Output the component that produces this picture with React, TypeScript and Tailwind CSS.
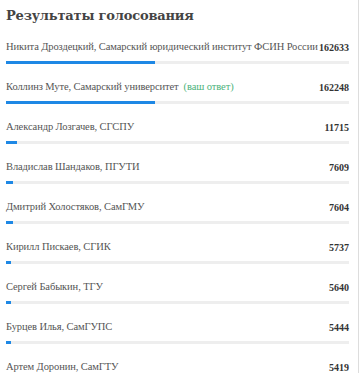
import React from 'react';

// --- DATOS ---
const results = [
  { name: 'Никита Дроздецкий, Самарский юридический институт ФСИН России', votes: 162633 },
  { name: 'Коллинз Муте, Самарский университет', votes: 162248, mine: true },
  { name: 'Александр Лозгачев, СГСПУ', votes: 11715 },
  { name: 'Владислав Шандаков, ПГУТИ', votes: 7609 },
  { name: 'Дмитрий Холостяков, СамГМУ', votes: 7604 },
  { name: 'Кирилл Пискаев, СГИК', votes: 5737 },
  { name: 'Сергей Бабыкин, ТГУ', votes: 5640 },
  { name: 'Бурцев Илья, СамГУПС', votes: 5444 },
  { name: 'Артем Доронин, СамГТУ', votes: 5419 },
];

const total = results.reduce((s, r) => s + r.votes, 0);

const ResultRow = ({ name, votes, mine }: { name: string; votes: number; mine?: boolean }) => (
  <div className="flex flex-col font-['Liberation_Serif',serif]">
    <div className="flex items-center justify-between gap-[6px] h-[14px]">
      <span className="min-w-0 text-[10.5px] text-[#555] whitespace-nowrap tracking-[-0.1px]">
        {name}
        {mine && <span className="ml-[5px] text-[#4cb37c]">(ваш ответ)</span>}
      </span>
      <span className="shrink-0 text-[10px] font-bold text-[#333]">{votes}</span>
    </div>
    <div className="mt-[7px] h-[3px] bg-[#eeeeee]">
      <div className="h-full bg-[#1e88e5]" style={{ width: `${(votes / total) * 100}%` }} />
    </div>
  </div>
);

function App() {
  return (
    <div className="w-[363px] h-[373px] bg-white overflow-hidden font-['DejaVu_Serif',serif]">
      <div className="w-[359px] h-full border-r border-[#dddddd] pl-[6px] pr-[9px]">
        <h1 className="pt-[6px] text-[13px] leading-[20px] font-bold text-[#444] tracking-[-0.2px]">Результаты голосования</h1>
        <div className="mt-[14px] flex flex-col gap-[16px]">
          {results.map((r) => (
            <ResultRow key={r.name} {...r} />
          ))}
        </div>
      </div>
    </div>
  );
}

export default App;
